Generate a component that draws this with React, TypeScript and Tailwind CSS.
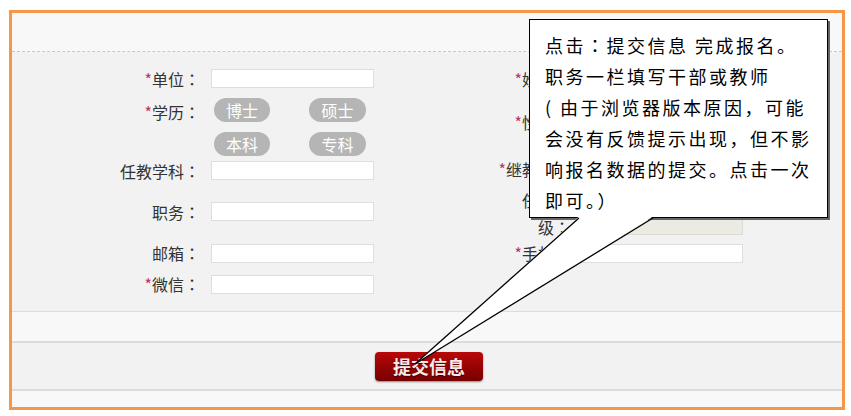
import React, { FC, ReactNode } from 'react';

const cjk = "font-['Noto_Sans_CJK_SC','Microsoft_YaHei',sans-serif]";

const Star: FC = () => <span className="text-[#c0306a]">*</span>;

// full-width colon centred in its box, as the original page renders it
const Colon: FC = () => <span className="font-['Noto_Sans_CJK_TC',sans-serif]">：</span>;

const Field: FC<{ beige?: boolean; className?: string }> = ({ beige, className }) => (
  <input
    readOnly
    className={`h-[19px] w-[163px] border outline-none ${
      beige ? 'border-[#dcdcd4] bg-[#ebebe4]' : 'border-[#dedede] bg-white'
    } ${className ?? ''}`}
  />
);

const Pill: FC<{ children: ReactNode }> = ({ children }) => (
  <span className="flex h-[24px] items-center justify-center rounded-full bg-[#b5b5b5] text-[16px] text-white">
    {children}
  </span>
);

const LeftLabel: FC<{ star?: boolean; children: ReactNode; className?: string }> = ({ star, children, className }) => (
  <div className={`w-[100px] text-right leading-[24px] ${className ?? ''}`}>
    {star && <Star />}
    {children}
    <Colon />
  </div>
);

const RightLabel: FC<{ star?: boolean; children: ReactNode; className?: string }> = ({ star, children, className }) => (
  <div className={`w-[75px] text-right leading-[24px] ${className ?? ''}`}>
    {star && <Star />}
    {children}
    <Colon />
  </div>
);

const App: FC = () => {
  return (
    <div className={`relative h-[416px] w-[851px] overflow-hidden bg-white pl-[9px] pt-[10px] ${cjk}`}>
      <div className="flex h-[400px] w-[836px] flex-col border-[3px] border-[#f79646] bg-[#f2f2f2]">
        {/* top strip */}
        <div className="h-[39px] border-b border-dashed border-[#c8c8c8] bg-[#f8f8f8]" />

        {/* form */}
        <div className="flex h-[259px] flex-col pb-[9px] pl-[88px] pt-[14px] text-[16px] text-[#333]">
          <div className="flex h-[25px] items-center">
            <div className="flex w-[274px] items-center">
              <LeftLabel star>单位</LeftLabel>
              <Field className="ml-[11px]" />
            </div>
            <div className="ml-[121px] flex items-center">
              <RightLabel star>姓名</RightLabel>
              <Field className="ml-[10px]" />
            </div>
          </div>

          <div className="flex h-[67px] items-start">
            <div className="flex w-[274px] items-start">
              <LeftLabel star className="mt-[9px]">学历</LeftLabel>
              <div className="ml-[14px] mt-[7px] grid grid-cols-[56px_57px] gap-x-[39px] gap-y-[10px]">
                <Pill>博士</Pill>
                <Pill>硕士</Pill>
                <Pill>本科</Pill>
                <Pill>专科</Pill>
              </div>
            </div>
            <div className="ml-[121px] flex items-start">
              <RightLabel star className="mt-[19px]">性别</RightLabel>
            </div>
          </div>

          <div className="flex h-[25px] items-center">
            <div className="flex w-[274px] items-center">
              <LeftLabel>任教学科</LeftLabel>
              <Field className="ml-[11px]" />
            </div>
            <div className="ml-[121px] flex items-center">
              <RightLabel star className="-mt-[4px]">继教号</RightLabel>
              <Field className="ml-[10px]" />
            </div>
          </div>

          <div className="flex h-[57px] items-center">
            <div className="flex w-[274px] items-center">
              <LeftLabel>职务</LeftLabel>
              <Field className="ml-[11px]" />
            </div>
            <div className="ml-[121px] flex h-full items-start">
              <RightLabel className="mt-[4px] leading-[27px]">任教年级</RightLabel>
              <Field beige className="mb-[5px] ml-[10px] self-end" />
            </div>
          </div>

          <div className="flex h-[26px] items-center">
            <div className="flex w-[274px] items-center">
              <LeftLabel>邮箱</LeftLabel>
              <Field className="ml-[11px]" />
            </div>
            <div className="ml-[121px] flex items-center">
              <RightLabel star>手机</RightLabel>
              <Field className="ml-[10px]" />
            </div>
          </div>

          <div className="flex h-[36px] items-center">
            <div className="flex w-[274px] items-center">
              <LeftLabel star>微信</LeftLabel>
              <Field className="ml-[11px]" />
            </div>
          </div>
        </div>

        <div className="h-[30px] border-t border-[#dcdcdc] bg-[#f8f8f8]" />

        <div className="h-[48px] border-t-2 border-[#dcdcdc] pl-[363px] pt-[9px]">
          <button className="h-[29px] w-[108px] rounded-[4px] bg-linear-to-b from-[#b90808] to-[#780000] text-[18px] font-bold leading-[29px] text-[#fbe9e9] shadow-[0_1px_2px_rgba(0,0,0,0.45)] [text-shadow:0_1px_1px_rgba(60,0,0,0.8)]">
            提交信息
          </button>
        </div>

        <div className="h-[18px] border-t-2 border-[#dcdcdc] bg-[#f8f8f8]" />
      </div>

      {/* callout */}
      <div className="absolute left-[529px] top-[19px] h-[199px] w-[299px] border border-black bg-white pl-[15px] pt-[10px] text-[18px] leading-[31px] tracking-[2.5px] text-black shadow-[2px_2px_0_#666]">
        <p className="whitespace-nowrap">
          点击<Colon />提交信息 完成报名。
          <br />
          职务一栏填写干部或教师
          <br />( 由于浏览器版本原因，可能
          <br />
          会没有反馈提示出现，但不影
          <br />
          响报名数据的提交。点击一次
          <br />
          即可。）
        </p>
      </div>
      <svg className="pointer-events-none absolute left-0 top-0" width="851" height="416" viewBox="0 0 851 416">
        <polygon points="579,216.5 653,216.5 415,364" fill="#fff" />
        <line x1="579" y1="218" x2="415" y2="364" stroke="#000" strokeWidth="1.3" />
        <line x1="653" y1="218" x2="415" y2="364" stroke="#000" strokeWidth="1.3" />
      </svg>
    </div>
  );
};

export default App;
